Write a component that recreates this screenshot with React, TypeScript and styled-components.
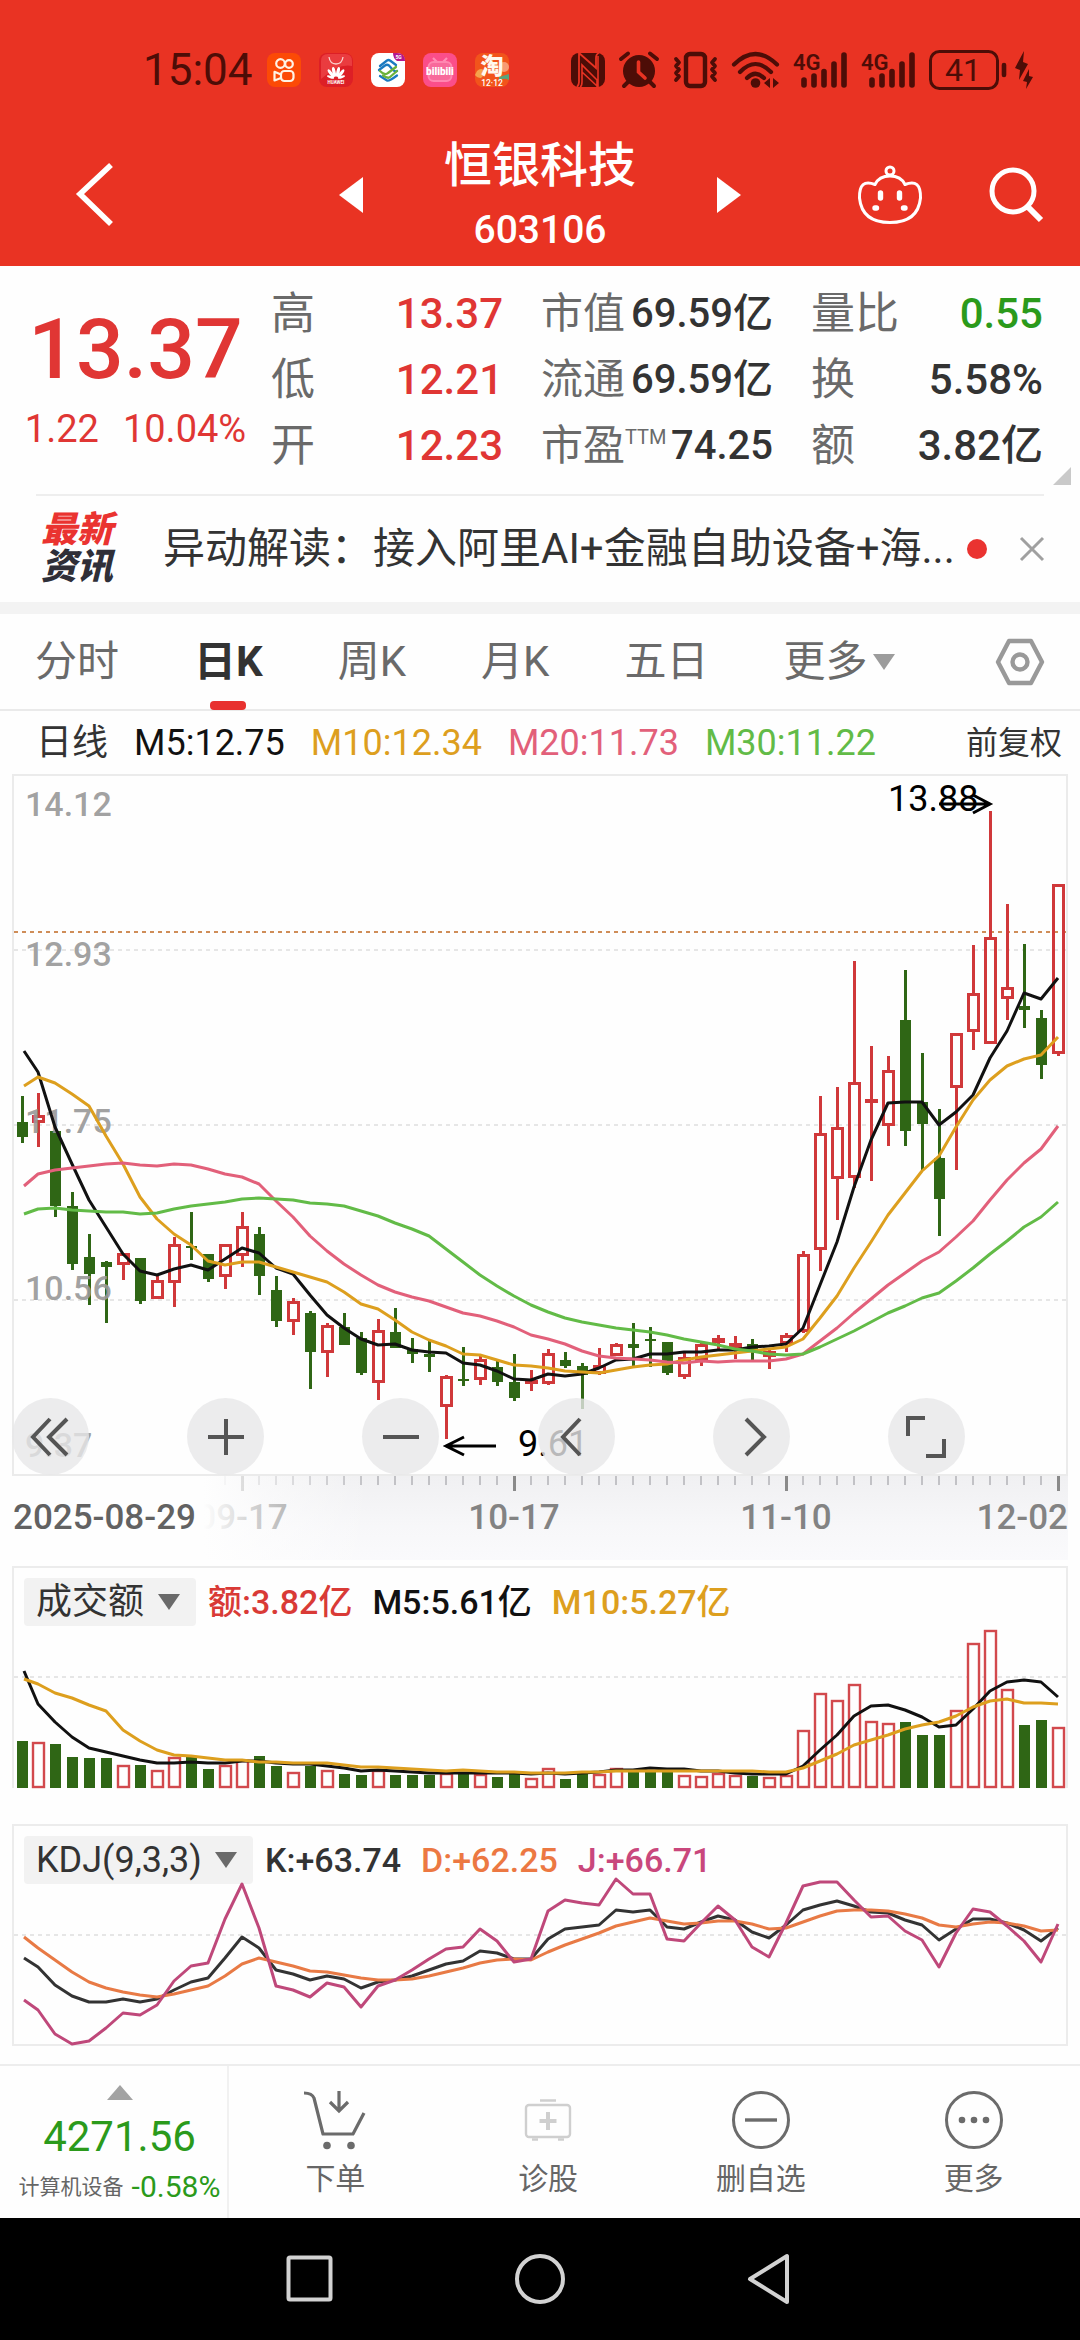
import React from "react";
import styled, { createGlobalStyle } from "styled-components";

const SANS = `Roboto, "Noto Sans CJK SC", sans-serif`;
const RED = "#e93323";
const UP = "#e03634";
const DOWN = "#2b9a1b";
const INK = "#333333";
const STATUS = "#4d0d07";

const GlobalStyle = createGlobalStyle`
  * { box-sizing: border-box; }
  body { margin: 0; background: #fefefe; font-family: ${SANS}; color: ${INK}; }
  button, select { font: inherit; color: inherit; margin: 0; padding: 0; border: 0; background: none; cursor: pointer; }
  a { color: inherit; text-decoration: none; }
  dl, dd, dt, h1, p { margin: 0; font-weight: inherit; }
  svg { display: block; overflow: visible; }
`;

const Page = styled.div`
  display: flex;
  flex-direction: column;
`;

/* ---------- status bar and title ---------- */

const Top = styled.header`
  background: ${RED};
  color: #fff;
`;

const StatusBar = styled.div`
  display: flex;
  align-items: center;
  height: 96px;
  padding: 44px 47px 0 143px;
  color: ${STATUS};
`;

const Clock = styled.time`
  font-size: 44px;
  line-height: 52px;
  margin-right: 14px;
`;

const IconRow = styled.div<{ $gap: number; $end?: boolean }>`
  display: flex;
  align-items: center;
  gap: ${(p) => p.$gap}px;
  margin-left: ${(p) => (p.$end ? "auto" : "0")};
`;

const TitleBar = styled.div`
  display: grid;
  grid-template-columns: 1fr 354px 1fr;
  align-items: center;
  height: 170px;
  padding-top: 28px;
`;

const TitleSide = styled.div<{ $left?: boolean }>`
  display: flex;
  align-items: center;
  justify-content: space-between;
  padding: ${(p) => (p.$left ? "0 0 0 75px" : "0 35px 0 0")};
`;

const Title = styled.div`
  padding-top: 6px;
  text-align: center;
`;

const StockName = styled.h1`
  font-size: 48px;
  line-height: 64px;
  font-weight: 500;
`;

const StockCode = styled.p`
  font-size: 39px;
  line-height: 64px;
  font-weight: 500;
`;

/* ---------- quote ---------- */

const Quote = styled.section`
  position: relative;
  display: flex;
  padding: 15px 37px 15px 0;
`;

const PriceBlock = styled.div`
  flex: 0 0 271px;
  padding-top: 20px;
  text-align: center;
  color: ${UP};
`;

const Price = styled.p`
  font-size: 84px;
  line-height: 98px;
  font-weight: 500;
`;

const Change = styled.p`
  display: flex;
  justify-content: center;
  gap: 24px;
  font-size: 38px;
  line-height: 60px;
`;

const Stats = styled.dl`
  flex: 1;
  display: grid;
  grid-template-columns: repeat(3, 1fr);
  column-gap: 38px;
`;

const Stat = styled.div`
  display: flex;
  justify-content: space-between;
  height: 66px;
  line-height: 66px;
  white-space: nowrap;
`;

const StatLabel = styled.dt<{ $tight?: boolean }>`
  font-size: ${(p) => (p.$tight ? 42 : 44)}px;
  color: #6a6a6a;
`;

const Sup = styled.sup`
  font-size: 20px;
  line-height: 20px;
  vertical-align: 16px;
`;

const StatValue = styled.dd<{ $tight?: boolean; $color?: string }>`
  font-size: ${(p) => (p.$tight ? 40 : 42)}px;
  font-weight: 500;
  color: ${(p) => p.$color ?? INK};
`;

const Corner = styled.svg`
  position: absolute;
  right: 9px;
  bottom: 9px;
`;

/* ---------- news ---------- */

const News = styled.section`
  display: flex;
  align-items: center;
  height: 108px;
  margin: 0 36px;
  border-top: 2px solid #eeeeee;
`;

const NewsBadge = styled.div`
  width: 127px;
  padding-left: 5px;
  font-size: 36px;
  line-height: 37px;
  font-weight: 900;
  font-style: italic;
`;

const BadgeLine = styled.span<{ $hot?: boolean }>`
  display: block;
  color: ${(p) => (p.$hot ? "#ea3330" : "#2f2f38")};
`;

const NewsLink = styled.a`
  font-size: 42px;
  line-height: 60px;
  white-space: nowrap;
  overflow: hidden;
`;

const Dot = styled.span`
  flex: none;
  width: 20px;
  height: 20px;
  margin-left: 12px;
  border-radius: 50%;
  background: #ea3330;
`;

const CloseButton = styled.button`
  margin-left: auto;
`;

const Band = styled.div`
  height: 12px;
  background: #f3f3f3;
`;

/* ---------- tabs and legend ---------- */

const Tabs = styled.nav`
  display: flex;
  align-items: stretch;
  gap: 75px;
  height: 97px;
  padding: 0 35px;
  border-bottom: 2px solid #eaeaea;
`;

const Tab = styled.button<{ $active?: boolean }>`
  position: relative;
  display: flex;
  align-items: center;
  gap: 5px;
  font-size: 42px;
  line-height: 48px;
  font-weight: ${(p) => (p.$active ? 700 : 400)};
  color: ${(p) => (p.$active ? INK : "#6a6a6a")};
  &::after {
    content: "";
    display: ${(p) => (p.$active ? "block" : "none")};
    position: absolute;
    left: 50%;
    bottom: -1px;
    width: 36px;
    height: 9px;
    margin-left: -18px;
    border-radius: 4px;
    background: #e8312f;
  }
`;

const SettingsButton = styled.button`
  margin-left: auto;
`;

const Legend = styled.div`
  display: flex;
  align-items: center;
  gap: 26px;
  height: 63px;
  padding: 0 18px 0 36px;
  font-size: 36px;
  line-height: 40px;
`;

const Tint = styled.span<{ $color: string }>`
  color: ${(p) => p.$color};
`;

const AdjustButton = styled.button`
  margin-left: auto;
  font-size: 32px;
`;

/* ---------- charts ---------- */

const ChartArea = styled.section`
  position: relative;
`;

const Plot = styled.svg`
  width: 100%;
  height: auto;
  font-family: ${SANS};
`;

const ChartTools = styled.div`
  position: absolute;
  left: 0;
  right: 0;
  bottom: 1px;
  display: flex;
  justify-content: space-between;
  padding: 0 115px 0 12px;
`;

const ToolButton = styled.button`
  display: grid;
  place-items: center;
  width: 77px;
  height: 77px;
  border-radius: 50%;
  background: rgba(231, 231, 232, 0.8);
`;

const Panel = styled.section<{ $closed?: boolean }>`
  margin: ${(p) => (p.$closed ? "36px 12px 18px" : "6px 12px 0")};
  border: 2px solid #ececec;
  border-bottom-width: ${(p) => (p.$closed ? 2 : 0)}px;
`;

const PanelHead = styled.div`
  display: flex;
  align-items: center;
  gap: 20px;
  height: 60px;
  padding: 8px 10px 0;
  font-size: 34px;
  line-height: 48px;
  font-weight: 500;
  white-space: nowrap;
`;

const Picker = styled.label`
  display: flex;
  align-items: center;
  gap: 12px;
  height: 48px;
  margin-right: -8px;
  padding: 0 15px 0 12px;
  border-radius: 4px;
  background: #f2f2f2;
`;

const PickerSelect = styled.select`
  appearance: none;
  height: 48px;
  font-size: 36px;
  font-weight: 400;
`;

/* ---------- bottom bars ---------- */

const BottomBar = styled.nav`
  display: flex;
  height: 154px;
  border-top: 2px solid #ededed;
`;

const IndexButton = styled.button`
  display: flex;
  flex-direction: column;
  align-items: center;
  width: 229px;
  padding: 19px 0 0 12px;
  border-right: 2px solid #f1f1f1;
  color: ${DOWN};
`;

const IndexValue = styled.span`
  font-size: 42px;
  line-height: 44px;
  margin-top: 15px;
`;

const IndexNote = styled.span`
  display: flex;
  align-items: center;
  gap: 8px;
  margin-top: 10px;
  font-size: 30px;
  line-height: 36px;
`;

const IndexName = styled.span`
  font-size: 21px;
  color: #666;
`;

const Action = styled.button`
  flex: 1;
  display: flex;
  flex-direction: column;
  align-items: center;
  padding-top: 24px;
  font-size: 30px;
  line-height: 36px;
  color: #666;
  gap: 11px;
`;

const SystemNav = styled.nav`
  display: flex;
  justify-content: center;
  align-items: center;
  gap: 180px;
  height: 122px;
  background: #000;
`;

/* ---------- data ---------- */

type Candle = [boolean, number, number, number, number];
const U = true;
const D = false;

// rising?, high, body top, body bottom, low
const candles: Candle[] = [
  [D, 1096, 1122, 1137, 1143], [U, 1093, 1115, 1123, 1147], [D, 1131, 1131, 1206, 1217], [D, 1192, 1206, 1264, 1270],
  [D, 1234, 1257, 1274, 1305], [D, 1261, 1262, 1267, 1323], [U, 1253, 1253, 1265, 1280], [D, 1258, 1258, 1301, 1304],
  [U, 1274, 1280, 1299, 1299], [U, 1237, 1244, 1283, 1307], [D, 1212, 1246, 1248, 1260], [D, 1254, 1254, 1279, 1282],
  [U, 1244, 1244, 1277, 1289], [U, 1212, 1226, 1256, 1267], [D, 1227, 1234, 1276, 1295], [D, 1276, 1290, 1321, 1327],
  [U, 1298, 1301, 1322, 1335], [D, 1311, 1313, 1352, 1389], [U, 1323, 1325, 1353, 1377], [D, 1313, 1327, 1345, 1345],
  [D, 1332, 1338, 1373, 1375], [U, 1319, 1330, 1383, 1400], [D, 1308, 1332, 1348, 1348], [D, 1338, 1349, 1354, 1363],
  [D, 1341, 1354, 1357, 1372], [U, 1375, 1376, 1407, 1439], [D, 1347, 1379, 1381, 1386], [U, 1356, 1359, 1380, 1385],
  [D, 1359, 1367, 1382, 1386], [D, 1354, 1382, 1398, 1401], [U, 1370, 1380, 1384, 1391], [U, 1349, 1353, 1384, 1385],
  [D, 1352, 1360, 1366, 1368], [D, 1363, 1366, 1375, 1409], [U, 1348, 1365, 1374, 1375], [U, 1343, 1344, 1356, 1356],
  [D, 1323, 1344, 1348, 1367], [D, 1327, 1339, 1341, 1367], [D, 1342, 1342, 1373, 1375], [U, 1353, 1357, 1377, 1379],
  [U, 1343, 1344, 1361, 1366], [U, 1335, 1338, 1343, 1351], [U, 1336, 1343, 1348, 1359], [D, 1339, 1344, 1351, 1360],
  [U, 1350, 1351, 1357, 1369], [U, 1333, 1335, 1344, 1352], [U, 1251, 1254, 1332, 1333], [U, 1096, 1133, 1250, 1271],
  [U, 1087, 1127, 1179, 1220], [U, 961, 1082, 1178, 1188], [U, 1046, 1099, 1103, 1181], [U, 1056, 1070, 1126, 1146],
  [D, 970, 1020, 1131, 1146], [D, 1053, 1102, 1124, 1170], [D, 1109, 1158, 1199, 1236], [U, 1033, 1033, 1088, 1170],
  [U, 945, 993, 1032, 1050], [U, 811, 937, 1044, 1044], [U, 904, 987, 999, 1020], [D, 944, 1006, 1010, 1028],
  [D, 1010, 1018, 1065, 1079], [U, 884, 884, 1054, 1056],
];

const ma5 = [1051, 1072, 1127, 1164, 1200, 1227, 1254, 1271, 1275, 1269, 1265, 1270, 1259, 1248, 1253, 1268, 1274, 1295, 1315, 1328, 1339, 1345, 1344, 1350, 1352, 1353, 1363, 1365, 1371, 1379, 1380, 1374, 1376, 1374, 1368, 1360, 1359, 1354, 1354, 1352, 1352, 1350, 1350, 1347, 1346, 1344, 1328, 1285, 1242, 1187, 1140, 1103, 1102, 1102, 1125, 1112, 1095, 1058, 1031, 993, 999, 978];
const ma10 = [1086, 1077, 1083, 1094, 1106, 1136, 1164, 1197, 1219, 1234, 1245, 1261, 1265, 1262, 1262, 1267, 1272, 1277, 1282, 1292, 1304, 1309, 1320, 1332, 1340, 1346, 1354, 1355, 1360, 1365, 1366, 1368, 1371, 1372, 1373, 1370, 1367, 1365, 1364, 1360, 1357, 1355, 1353, 1351, 1349, 1347, 1339, 1318, 1296, 1268, 1242, 1215, 1193, 1171, 1156, 1127, 1100, 1080, 1066, 1059, 1055, 1037];
const ma20 = [1186, 1174, 1170, 1168, 1166, 1164, 1163, 1165, 1166, 1164, 1165, 1169, 1174, 1177, 1184, 1201, 1217, 1236, 1251, 1264, 1275, 1285, 1292, 1297, 1301, 1307, 1313, 1316, 1321, 1327, 1335, 1339, 1344, 1351, 1356, 1358, 1359, 1360, 1362, 1363, 1361, 1362, 1361, 1361, 1361, 1359, 1354, 1341, 1328, 1313, 1299, 1285, 1273, 1261, 1252, 1237, 1221, 1200, 1180, 1163, 1149, 1126];
const ma30 = [1214, 1209, 1208, 1210, 1211, 1212, 1212, 1214, 1213, 1209, 1206, 1204, 1202, 1199, 1198, 1199, 1200, 1203, 1204, 1206, 1211, 1216, 1223, 1229, 1236, 1249, 1262, 1275, 1286, 1296, 1305, 1312, 1318, 1322, 1325, 1328, 1330, 1332, 1335, 1339, 1342, 1345, 1349, 1351, 1354, 1355, 1354, 1347, 1339, 1331, 1322, 1313, 1306, 1298, 1293, 1281, 1268, 1254, 1241, 1227, 1217, 1202];

const volumes = [1741, 1742, 1744, 1757, 1758, 1758, 1765, 1765, 1770, 1757, 1757, 1769, 1765, 1760, 1756, 1766, 1772, 1766, 1770, 1774, 1775, 1770, 1775, 1775, 1775, 1773, 1772, 1774, 1777, 1772, 1778, 1768, 1779, 1774, 1774, 1768, 1772, 1771, 1772, 1775, 1776, 1773, 1775, 1776, 1777, 1775, 1730, 1693, 1700, 1684, 1721, 1723, 1722, 1735, 1735, 1710, 1643, 1630, 1689, 1725, 1720, 1727];
const vol5 = [1671, 1704, 1722, 1737, 1748, 1752, 1756, 1760, 1763, 1763, 1762, 1763, 1763, 1761, 1761, 1763, 1764, 1764, 1766, 1768, 1771, 1770, 1771, 1772, 1773, 1773, 1773, 1773, 1773, 1773, 1774, 1773, 1774, 1773, 1772, 1770, 1770, 1768, 1769, 1769, 1771, 1771, 1773, 1774, 1774, 1774, 1766, 1750, 1735, 1716, 1706, 1705, 1710, 1717, 1727, 1725, 1709, 1691, 1682, 1680, 1682, 1697];
const vol10 = [1679, 1684, 1693, 1698, 1705, 1711, 1730, 1741, 1750, 1755, 1756, 1758, 1760, 1760, 1762, 1762, 1763, 1763, 1763, 1765, 1767, 1767, 1768, 1769, 1770, 1771, 1770, 1771, 1772, 1772, 1773, 1773, 1773, 1772, 1772, 1771, 1771, 1771, 1771, 1771, 1771, 1771, 1771, 1771, 1772, 1772, 1768, 1761, 1754, 1745, 1740, 1735, 1729, 1725, 1722, 1716, 1707, 1701, 1699, 1703, 1703, 1704];

const lineK = [1958, 1967, 1985, 1996, 2002, 2002, 1999, 2002, 1999, 1990, 1982, 1978, 1958, 1937, 1948, 1970, 1974, 1980, 1976, 1979, 1988, 1982, 1980, 1976, 1970, 1964, 1961, 1951, 1953, 1959, 1959, 1939, 1929, 1927, 1925, 1910, 1912, 1910, 1927, 1929, 1922, 1916, 1920, 1932, 1938, 1925, 1910, 1905, 1901, 1906, 1912, 1913, 1920, 1925, 1940, 1929, 1919, 1919, 1923, 1930, 1941, 1928];
const lineD = [1937, 1948, 1960, 1972, 1982, 1988, 1992, 1995, 1997, 1994, 1990, 1986, 1976, 1964, 1958, 1962, 1966, 1971, 1972, 1975, 1978, 1980, 1980, 1979, 1976, 1972, 1968, 1963, 1960, 1959, 1960, 1952, 1945, 1939, 1933, 1926, 1922, 1918, 1921, 1924, 1923, 1921, 1921, 1924, 1929, 1928, 1922, 1916, 1911, 1910, 1910, 1911, 1914, 1918, 1925, 1927, 1924, 1922, 1923, 1926, 1931, 1930];
const lineJ = [2000, 2010, 2034, 2044, 2041, 2028, 2013, 2015, 2005, 1981, 1966, 1963, 1919, 1884, 1928, 1986, 1990, 1997, 1983, 1987, 2007, 1986, 1980, 1970, 1959, 1949, 1947, 1929, 1941, 1962, 1959, 1911, 1900, 1903, 1905, 1879, 1894, 1894, 1939, 1941, 1923, 1906, 1920, 1947, 1957, 1923, 1886, 1882, 1882, 1900, 1917, 1916, 1931, 1940, 1967, 1933, 1909, 1912, 1926, 1941, 1962, 1924];

const UP_BAR = "#d0383a";
const DOWN_BAR = "#2f6615";
const AMBER = "#dd9f1e";
const PINK = "#e2607a";
const GREEN = "#62bb47";

const stepX = (i: number) => 21 + i * 17 + (i === 0 ? 1 : 0);

function Line({ data, color }: { data: number[]; color: string }) {
  const points = data.map((y, i) => `${i === 0 ? 24 : stepX(i)},${y}`).join(" ");
  return <polyline points={points} fill="none" stroke={color} strokeWidth={3} strokeLinejoin="round" />;
}

function GridLine({ y, color = "#dedede", width = 1.5 }: { y: number; color?: string; width?: number }) {
  return <line x1={14} x2={1066} y1={y} y2={y} stroke={color} strokeWidth={width} strokeDasharray="4 4" />;
}

function CandleMark({ candle, index }: { candle: Candle; index: number }) {
  const [rising, high, top, bottom, low] = candle;
  const x = stepX(index);
  if (!rising) {
    return (
      <g fill={DOWN_BAR}>
        <rect x={x - 1} y={high} width={3} height={low - high} />
        <rect x={x - 5} y={top} width={11} height={bottom - top} />
      </g>
    );
  }
  return (
    <g stroke={UP_BAR} strokeWidth={3} fill="none">
      <path d={`M${x + 0.5} ${high}V${top}M${x + 0.5} ${bottom}V${low}`} />
      <rect x={x - 4.5} y={top + 1.5} width={10} height={Math.max(bottom - top - 3, 1)} />
    </g>
  );
}

function PriceChart() {
  const scale: [string, number][] = [["14.12", 816], ["12.93", 966], ["11.75", 1133], ["10.56", 1300], ["9.37", 1457]];
  return (
    <Plot viewBox="0 774 1080 702" role="img" aria-label="日K线图">
      <rect x={13} y={775} width={1054} height={700} fill="none" stroke="#ebebeb" strokeWidth={2} />
      <GridLine y={950} />
      <GridLine y={1125} />
      <GridLine y={1300} />
      <GridLine y={932} color="#cf8d58" width={2} />
      {candles.map((c, i) => <CandleMark key={i} candle={c} index={i} />)}
      <g fontSize={34} fontWeight={500} fill="#999" fillOpacity={0.92}>
        {scale.map(([label, y]) => <text key={label} x={25} y={y}>{label}</text>)}
      </g>
      <Line data={ma5} color="#111" />
      <Line data={ma10} color={AMBER} />
      <Line data={ma20} color={PINK} />
      <Line data={ma30} color={GREEN} />
      <g fontSize={36} fill="#000">
        <text x={888} y={811}>13.88</text>
        <text x={518} y={1456}>9.61</text>
      </g>
      <path d="M939 804H990M973 795L990 804L973 813M496 1446H446M464 1437L446 1446L464 1455" fill="none" stroke="#000" strokeWidth={3} />
    </Plot>
  );
}

function TimeAxis() {
  const ticks = Array.from({ length: 50 }, (_, k) => k + 12);
  return (
    <Plot viewBox="0 1476 1080 84" role="img" aria-label="日期轴">
      <defs>
        <linearGradient id="axisShade" x1="0" y1="0" x2="0" y2="1">
          <stop offset="0" stopColor="#f0f0f2" />
          <stop offset="0.6" stopColor="#f7f7f9" />
          <stop offset="1" stopColor="#fafafc" />
        </linearGradient>
        <linearGradient id="axisFade" x1="0" y1="0" x2="1" y2="0">
          <stop offset="0.55" stopColor="#fefefe" />
          <stop offset="0.7" stopColor="#fefefe" stopOpacity="0.6" />
          <stop offset="1" stopColor="#fefefe" stopOpacity="0" />
        </linearGradient>
      </defs>
      <rect x={12} y={1476} width={1056} height={84} fill="url(#axisShade)" />
      {ticks.map((i) => {
        const major = (i - 13) % 16 === 0;
        return <rect key={i} x={stepX(i) - 1} y={1476} width={major ? 3 : 2} height={major ? 15 : 9} fill={major ? "#8a8a8a" : "#c2c2c6"} />;
      })}
      <g fontSize={35} fontWeight={500} fill="#838383">
        <text x={242} y={1529} textAnchor="middle">09-17</text>
        <text x={514} y={1529} textAnchor="middle">10-17</text>
        <text x={786} y={1529} textAnchor="middle">11-10</text>
        <text x={1068} y={1529} textAnchor="end">12-02</text>
        <rect x={0} y={1476} width={370} height={84} fill="url(#axisFade)" />
        <text x={13} y={1529} fill="#626262">2025-08-29</text>
      </g>
    </Plot>
  );
}

function VolumeChart() {
  return (
    <Plot viewBox="14 1628 1052 160" role="img" aria-label="成交额图">
      <GridLine y={1677} />
      {volumes.map((top, i) => {
        const x = stepX(i);
        return candles[i][0] ? (
          <rect key={i} x={x - 5} y={top + 1} width={11} height={1787 - top - 1} fill="#fefefe" stroke="#d2494d" strokeWidth={2.4} />
        ) : (
          <rect key={i} x={x - 5} y={top} width={11} height={1788 - top} fill={DOWN_BAR} />
        );
      })}
      <Line data={vol5} color="#111" />
      <Line data={vol10} color={AMBER} />
    </Plot>
  );
}

function KdjChart() {
  return (
    <Plot viewBox="14 1886 1052 158" role="img" aria-label="KDJ指标图">
      <GridLine y={1935} />
      <Line data={lineK} color="#333" />
      <Line data={lineD} color="#e87a45" />
      <Line data={lineJ} color="#bf487a" />
    </Plot>
  );
}

/* ---------- icons ---------- */

function Kuaishou() {
  return (
    <svg width="34" height="34" viewBox="0 0 34 34" aria-hidden="true">
      <rect width="34" height="34" rx="8" fill="#fc4a06" />
      <g fill="none" stroke="#fff3e4" strokeWidth="2.2">
        <circle cx="13.5" cy="10.5" r="4.3" /><circle cx="22" cy="11" r="3.8" />
        <rect x="14" y="18" width="12.5" height="10" rx="3.4" />
        <path d="M14 21.5L7.5 18.8V27.5L14 25" strokeLinejoin="round" />
      </g>
    </svg>
  );
}

function Huawei() {
  return (
    <svg width="34" height="34" viewBox="0 0 34 34" aria-hidden="true">
      <rect width="34" height="34" rx="8" fill="#dd1f26" />
      <path d="M2 8Q2 1 9 1H26Q33 1 33 8V13Q20 10 2 26Z" fill="#f0494a" opacity=".7" />
      <path d="M10 4Q11 11 17 11T24 4" fill="none" stroke="#fbd0cc" strokeWidth="1.3" />
      <g fill="#fff">
        <ellipse cx="15" cy="19" rx="1.7" ry="5" transform="rotate(-12 15 19)" /><ellipse cx="19" cy="19" rx="1.7" ry="5" transform="rotate(12 19 19)" />
        <ellipse cx="12" cy="20.5" rx="1.6" ry="5" transform="rotate(-38 12 20.5)" /><ellipse cx="22" cy="20.5" rx="1.6" ry="5" transform="rotate(38 22 20.5)" />
        <ellipse cx="11.5" cy="24" rx="1.2" ry="3.7" transform="rotate(-72 11.5 24)" /><ellipse cx="22.5" cy="24" rx="1.2" ry="3.7" transform="rotate(72 22.5 24)" />
        <text x="17" y="31" textAnchor="middle" fontSize="4.5" fontWeight="700">HUAWEI</text>
      </g>
    </svg>
  );
}

function ChinaMobile() {
  return (
    <svg width="34" height="34" viewBox="0 0 34 34" aria-hidden="true">
      <rect width="34" height="34" rx="8" fill="#fff" />
      <path d="M22 0H26Q34 0 34 8H26Q22 5 22 0Z" fill="#b3168f" />
      <text x="24.5" y="5.8" fontSize="5" fill="#fff" fontWeight="700">5G</text>
      <g fill="none" strokeWidth="2.3" strokeLinecap="round" strokeLinejoin="round">
        <path d="M9 13L16 7.5Q17.500 6.5 19 7.5L25 12" stroke="#1b79c0" />
        <path d="M8 17L14 12.5Q16 11 18 12.5L22 17Q24 19 26 18" stroke="#1b79c0" />
        <path d="M9 23L16 27.5Q18 28.500 26 22.5" stroke="#1b79c0" />
        <path d="M12 22.5Q17 26 19 24L26 18" stroke="#6bb23b" /><path d="M9 18Q14 23 17 20L25 14" stroke="#6bb23b" />
      </g>
    </svg>
  );
}

function Bilibili() {
  return (
    <svg width="34" height="34" viewBox="0 0 34 34" aria-hidden="true">
      <rect width="34" height="34" rx="8" fill="#fb4e8a" />
      <path d="M10 5L14 9M24 5L20 9" stroke="#ff8fb6" strokeWidth="2.2" />
      <rect x="5.5" y="9" width="23" height="19" rx="5" fill="#f8699b" stroke="#ff86b0" strokeWidth="2" />
      <text x="17" y="22" textAnchor="middle" fontSize="10" fontWeight="900" fill="#fff">bilibili</text>
    </svg>
  );
}

function Taobao() {
  return (
    <svg width="34" height="34" viewBox="0 0 34 34" aria-hidden="true">
      <rect width="34" height="34" rx="8" fill="#f2541b" />
      <path d="M2 18Q7 13 11 20L6 25Q2 25 0 22Z" fill="#f5a34c" /><circle cx="29" cy="14" r="5" fill="#f79b73" />
      <path d="M24 24L34 21V27Q28 24 24 28Z" fill="#58a57c" />
      <text x="17" y="21" textAnchor="middle" fontSize="23" fontWeight="900" fill="#fff8ef">淘</text>
      <text x="17" y="33" textAnchor="middle" fontSize="8.5" fontWeight="500" fill="#fff">12·12</text>
    </svg>
  );
}

function Nfc() {
  return (
    <svg width="34" height="34" viewBox="0 0 34 34" aria-hidden="true">
      <rect width="34" height="34" rx="8" fill={STATUS} />
      <path d="M8 0V29Q8 32 6 34M8 0L25 15V5Q25 1 28 0" stroke={RED} strokeWidth="1.8" fill="none" />
      <path d="M26 34V27L11 12V29Q11 33 9 34M11 19L26 33M27 3V34" stroke={RED} strokeWidth="1.6" fill="none" />
    </svg>
  );
}

function Alarm() {
  return (
    <svg width="40" height="36" viewBox="0 0 40 36" aria-hidden="true">
      <circle cx="20" cy="19" r="16" fill={STATUS} />
      <path d="M2 7L9 1.5M38 7L31 1.5M9 30L5 34M31 30L35 34" stroke={STATUS} strokeWidth="4" strokeLinecap="round" />
      <path d="M19.5 10V20L26 26" fill="none" stroke={RED} strokeWidth="3.6" strokeLinecap="round" />
    </svg>
  );
}

function Vibrate() {
  return (
    <svg width="45" height="36" viewBox="0 0 45 36" fill="none" stroke={STATUS} aria-hidden="true">
      <rect x="13" y="2" width="19" height="32" rx="4" strokeWidth="4.4" />
      <path d="M3 7L6 10.5L3 14L6 17.5L3 21L6 24.5L3 28M42 7L39 10.5L42 14L39 17.5L42 21L39 24.5L42 28" strokeWidth="3.8" strokeLinecap="round" strokeLinejoin="round" />
    </svg>
  );
}

function Wifi() {
  return (
    <svg width="47" height="36" viewBox="0 0 47 36" fill="none" stroke={STATUS} strokeLinecap="round" aria-hidden="true">
      <path d="M2 12.5Q23.500 -8.5 45 12.5M8 20Q23.500 4 39 20M15 26Q23.500 17.5 32 26" strokeWidth="4.2" />
      <circle cx="23.5" cy="31" r="4.8" fill={STATUS} stroke="none" />
      <path d="M38 26V36L32 31ZM41 26V36L47 31Z" fill={STATUS} stroke="none" />
    </svg>
  );
}

function Signal() {
  return (
    <svg width="54" height="36" viewBox="0 0 54 36" aria-hidden="true">
      <path d="M11 28V33M21 24V33M31 19.5V33M41 12V33M51 3V33" stroke={STATUS} strokeWidth="5.6" strokeLinecap="round" />
      <text x="0" y="17.5" fontSize="22" fontWeight="600" fill={STATUS}>4G</text>
    </svg>
  );
}

function Battery() {
  return (
    <svg width="104" height="40" viewBox="0 0 104 40" aria-label="电量 41">
      <rect x="1.5" y="1.5" width="67" height="37" rx="9" fill="none" stroke={STATUS} strokeWidth="3" />
      <path d="M75 15V25" stroke={STATUS} strokeWidth="4.6" strokeLinecap="round" />
      <text x="34" y="31" textAnchor="middle" fontSize="32" fill={STATUS}>41</text>
      <path d="M95 1L86 18L91 20L90 30L99 14L94 12ZM100 19L94 31L98 32L97 39L104 27L100 26Z" fill={STATUS} />
    </svg>
  );
}

function Robot() {
  return (
    <svg width="64" height="60" viewBox="0 0 64 60" fill="none" stroke="#fff" aria-hidden="true">
      <circle cx="32" cy="6" r="4" strokeWidth="3" />
      <path d="M17 19.5Q21 11 32 11T47 19.5Q63 13 62.5 33Q60 57.5 32 57.5T1.5 33Q1 13 17 19.500Z" strokeWidth="3" strokeLinejoin="round" />
      <path d="M22.5 28V33M41.5 28V33" strokeWidth="5.4" strokeLinecap="round" />
      <path d="M17 43H18.5M45.5 43H47" strokeWidth="5.4" strokeLinecap="round" />
    </svg>
  );
}

function DownArrow({ color }: { color: string }) {
  return (
    <svg width="24" height="18" viewBox="0 0 24 18" aria-hidden="true">
      <path d="M1 1H23L12 17Z" fill={color} />
    </svg>
  );
}

function ToolIcon({ d }: { d: string }) {
  return (
    <svg width="44" height="44" viewBox="-22 -22 44 44" aria-hidden="true">
      <path d={d} fill="none" stroke="#555" strokeWidth="4" />
    </svg>
  );
}

const tools: [string, string][] = [
  ["最早", "M-1 -18L-18 0L-1 18M16 -18L-2 0L16 18"],
  ["放大", "M-18 0H18M0 -18V18"],
  ["缩小", "M-18 0H18"],
  ["上一日", "M4 -18L-13 0L4 18"],
  ["下一日", "M-5 -18L13 0L-5 18"],
  ["全屏", "M-1 -19H-18V-1M18 2V19H0"],
];

type StatItem = { label: string; sup?: string; value: string; color?: string };

const stats: StatItem[] = [
  { label: "高", value: "13.37", color: UP },
  { label: "市值", value: "69.59亿" },
  { label: "量比", value: "0.55", color: DOWN },
  { label: "低", value: "12.21", color: UP },
  { label: "流通", value: "69.59亿" },
  { label: "换", value: "5.58%" },
  { label: "开", value: "12.23", color: UP },
  { label: "市盈", sup: "TTM", value: "74.25" },
  { label: "额", value: "3.82亿" },
];

export default function App() {
  return (
    <Page>
      <GlobalStyle />
      <Top>
        <StatusBar>
          <Clock>15:04</Clock>
          <IconRow $gap={18}>
            <Kuaishou /><Huawei /><ChinaMobile /><Bilibili /><Taobao />
          </IconRow>
          <IconRow $gap={14} $end>
            <Nfc /><Alarm /><Vibrate /><Wifi /><Signal /><Signal /><Battery />
          </IconRow>
        </StatusBar>
        <TitleBar>
          <TitleSide $left>
            <button aria-label="返回">
              <svg width="40" height="66" viewBox="0 0 40 66"><path d="M36 3L5 32L36 62" fill="none" stroke="#fff" strokeWidth="5.6" /></svg>
            </button>
            <button aria-label="上一只">
              <svg width="24" height="36" viewBox="0 0 24 36"><path d="M24 0V36L0 18Z" fill="#fff" /></svg>
            </button>
          </TitleSide>
          <Title>
            <StockName>恒银科技</StockName>
            <StockCode>603106</StockCode>
          </Title>
          <TitleSide>
            <button aria-label="下一只">
              <svg width="24" height="36" viewBox="0 0 24 36"><path d="M0 0V36L24 18Z" fill="#fff" /></svg>
            </button>
            <IconRow $gap={67}>
              <button aria-label="智能助手"><Robot /></button>
              <button aria-label="搜索">
                <svg width="56" height="56" viewBox="0 0 56 56" fill="none" stroke="#fff">
                  <circle cx="24" cy="24" r="21" strokeWidth="5" /><path d="M38 39L52 53" strokeWidth="6" />
                </svg>
              </button>
            </IconRow>
          </TitleSide>
        </TitleBar>
      </Top>

      <Quote>
        <PriceBlock>
          <Price>13.37</Price>
          <Change><span>1.22</span><span>10.04%</span></Change>
        </PriceBlock>
        <Stats>
          {stats.map((s, i) => (
            <Stat key={s.label}>
              <StatLabel $tight={i % 3 === 1}>{s.label}{s.sup && <Sup>{s.sup}</Sup>}</StatLabel>
              <StatValue $tight={i % 3 === 1} $color={s.color}>{s.value}</StatValue>
            </Stat>
          ))}
        </Stats>
        <Corner width="18" height="18" viewBox="0 0 18 18" aria-hidden="true"><path d="M18 0V18H0Z" fill="#c9c9c9" /></Corner>
      </Quote>

      <News>
        <NewsBadge><BadgeLine $hot>最新</BadgeLine><BadgeLine>资讯</BadgeLine></NewsBadge>
        <NewsLink href="#news">异动解读：接入阿里AI+金融自助设备+海...</NewsLink>
        <Dot />
        <CloseButton aria-label="关闭">
          <svg width="24" height="24" viewBox="0 0 24 24"><path d="M1 1L23 23M23 1L1 23" stroke="#a0a0a0" strokeWidth="3" /></svg>
        </CloseButton>
      </News>
      <Band />

      <Tabs>
        <Tab>分时</Tab>
        <Tab $active>日K</Tab>
        <Tab>周K</Tab>
        <Tab>月K</Tab>
        <Tab>五日</Tab>
        <Tab>更多<DownArrow color="#9c9c9c" /></Tab>
        <SettingsButton aria-label="设置">
          <svg width="50" height="48" viewBox="0 0 50 48" fill="none" stroke="#999" strokeWidth="4.4">
            <path d="M14 3H36L47 24L36 45H14L3 24Z" strokeLinejoin="round" /><circle cx="25" cy="24" r="7.5" />
          </svg>
        </SettingsButton>
      </Tabs>
      <Legend>
        <span>日线</span>
        <Tint $color="#111">M5:12.75</Tint>
        <Tint $color={AMBER}>M10:12.34</Tint>
        <Tint $color={PINK}>M20:11.73</Tint>
        <Tint $color={GREEN}>M30:11.22</Tint>
        <AdjustButton>前复权</AdjustButton>
      </Legend>

      <ChartArea>
        <PriceChart />
        <ChartTools>
          {tools.map(([name, d]) => <ToolButton key={name} aria-label={name}><ToolIcon d={d} /></ToolButton>)}
        </ChartTools>
      </ChartArea>
      <TimeAxis />

      <Panel>
        <PanelHead>
          <Picker>
            <PickerSelect aria-label="副图指标一" defaultValue="成交额"><option>成交额</option></PickerSelect>
            <DownArrow color="#6a6a6a" />
          </Picker>
          <Tint $color="#d93a36">额:3.82亿</Tint>
          <Tint $color="#111">M5:5.61亿</Tint>
          <Tint $color={AMBER}>M10:5.27亿</Tint>
        </PanelHead>
        <VolumeChart />
      </Panel>

      <Panel $closed>
        <PanelHead>
          <Picker>
            <PickerSelect aria-label="副图指标二" defaultValue="KDJ(9,3,3)"><option>KDJ(9,3,3)</option></PickerSelect>
            <DownArrow color="#6a6a6a" />
          </Picker>
          <Tint $color={INK}>K:+63.74</Tint>
          <Tint $color="#ec7842">D:+62.25</Tint>
          <Tint $color="#c9477c">J:+66.71</Tint>
        </PanelHead>
        <KdjChart />
      </Panel>

      <BottomBar>
        <IndexButton>
          <svg width="26" height="15" viewBox="0 0 26 15" aria-hidden="true"><path d="M13 0L26 15H0Z" fill="#a3a3a3" /></svg>
          <IndexValue>4271.56</IndexValue>
          <IndexNote><IndexName>计算机设备</IndexName>-0.58%</IndexNote>
        </IndexButton>
        <Action>
          <svg width="64" height="60" viewBox="0 0 64 60" fill="none" stroke="#6b6b6b" strokeWidth="3.2">
            <path d="M1 3Q9 3 11 8L20 44H50L61 23" strokeLinejoin="round" />
            <path d="M36 1V20M27 12L36 21L45 12" />
            <circle cx="24" cy="55.5" r="3.8" fill="#6b6b6b" stroke="none" /><circle cx="48" cy="55.5" r="3.8" fill="#6b6b6b" stroke="none" />
          </svg>
          下单
        </Action>
        <Action>
          <svg width="48" height="60" viewBox="0 0 48 60" fill="none" stroke="#cfcfcf" strokeWidth="2.4">
            <rect x="2" y="15" width="44" height="32" rx="3" />
            <path d="M16 10.5H32M8 49.5H14M34 49.5H40" /><path d="M24 22V40M15.5 31H32.5" strokeWidth="4" />
          </svg>
          诊股
        </Action>
        <Action>
          <svg width="60" height="60" viewBox="0 0 60 60" fill="none" stroke="#6b6b6b" strokeWidth="3">
            <circle cx="30" cy="30" r="27.5" /><path d="M14 30H46" strokeWidth="3.4" />
          </svg>
          删自选
        </Action>
        <Action>
          <svg width="60" height="60" viewBox="0 0 60 60" fill="none" stroke="#6b6b6b" strokeWidth="3">
            <circle cx="30" cy="30" r="27.5" />
            <g fill="#6b6b6b" stroke="none"><circle cx="18" cy="30" r="3.3" /><circle cx="30" cy="30" r="3.3" /><circle cx="42" cy="30" r="3.3" /></g>
          </svg>
          更多
        </Action>
      </BottomBar>

      <SystemNav>
        <button aria-label="最近任务">
          <svg width="50" height="52" viewBox="0 0 50 52"><rect x="4.5" y="4.5" width="42" height="42" rx="1.5" fill="none" stroke="#d2d2d2" strokeWidth="4" /></svg>
        </button>
        <button aria-label="主屏幕">
          <svg width="52" height="52" viewBox="0 0 52 52"><circle cx="26" cy="26" r="23" fill="none" stroke="#d2d2d2" strokeWidth="4" /></svg>
        </button>
        <button aria-label="返回上级">
          <svg width="50" height="52" viewBox="0 0 50 52"><path d="M41 3V49L4 26Z" fill="none" stroke="#d2d2d2" strokeWidth="4" strokeLinejoin="round" /></svg>
        </button>
      </SystemNav>
    </Page>
  );
}
